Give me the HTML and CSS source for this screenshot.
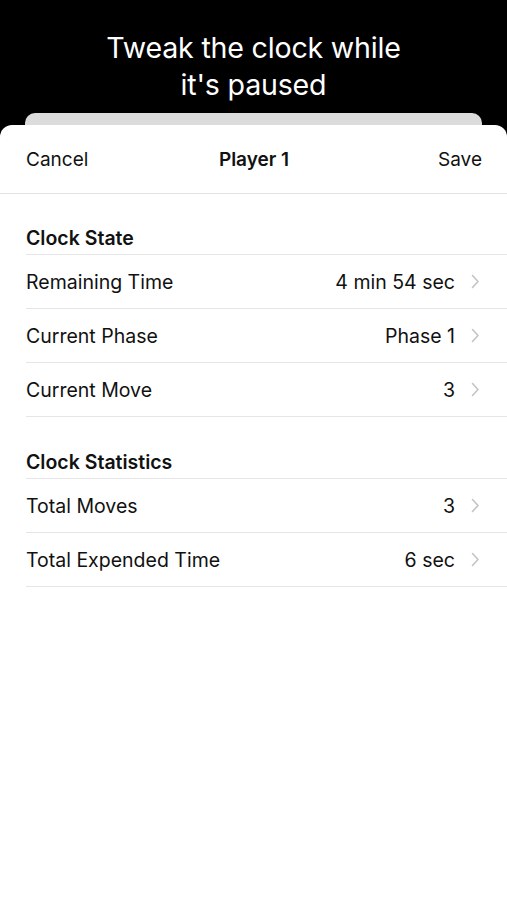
FILE: index.html
```html
<!doctype html>
<html>
  <head>
    <meta charset="utf-8">
    <link rel="stylesheet" href="styles.css">
  </head>
  <body>
    <div class="promo">
      <h1>Tweak the clock while<br>it's paused</h1>
    </div>

    <div class="stack">
      <div class="backSheet"></div>
      <div class="sheet">
        <div class="navBar">
          <span class="navButton">Cancel</span>
          <span class="navTitle">Player 1</span>
          <span class="navButton save">Save</span>
        </div>

        <div class="section first">
          <h2>Clock State</h2>
          <div class="row"><span class="label">Remaining Time</span><span class="value">4 min 54 sec</span><span class="chevron"><svg width="9" height="15" viewBox="0 0 9 15"><path d="M1.5 1.5 L7 7.5 L1.5 13.5" fill="none" stroke="#c4c4c7" stroke-width="1.6" stroke-linecap="round" stroke-linejoin="round"/></svg></span></div>
          <div class="row"><span class="label">Current Phase</span><span class="value">Phase 1</span><span class="chevron"><svg width="9" height="15" viewBox="0 0 9 15"><path d="M1.5 1.5 L7 7.5 L1.5 13.5" fill="none" stroke="#c4c4c7" stroke-width="1.6" stroke-linecap="round" stroke-linejoin="round"/></svg></span></div>
          <div class="row"><span class="label">Current Move</span><span class="value">3</span><span class="chevron"><svg width="9" height="15" viewBox="0 0 9 15"><path d="M1.5 1.5 L7 7.5 L1.5 13.5" fill="none" stroke="#c4c4c7" stroke-width="1.6" stroke-linecap="round" stroke-linejoin="round"/></svg></span></div>
        </div>

        <div class="section">
          <h2>Clock Statistics</h2>
          <div class="row"><span class="label">Total Moves</span><span class="value">3</span><span class="chevron"><svg width="9" height="15" viewBox="0 0 9 15"><path d="M1.5 1.5 L7 7.5 L1.5 13.5" fill="none" stroke="#c4c4c7" stroke-width="1.6" stroke-linecap="round" stroke-linejoin="round"/></svg></span></div>
          <div class="row"><span class="label">Total Expended Time</span><span class="value">6 sec</span><span class="chevron"><svg width="9" height="15" viewBox="0 0 9 15"><path d="M1.5 1.5 L7 7.5 L1.5 13.5" fill="none" stroke="#c4c4c7" stroke-width="1.6" stroke-linecap="round" stroke-linejoin="round"/></svg></span></div>
        </div>
      </div>
    </div>
  </body>
</html>
```

FILE: styles.css
```css
html, body {
  margin:0;
  padding:0;
  height:100%;
}

body {
  font-family:Inter, "Liberation Sans", sans-serif;
  background-color:#000;
  color:#111;
  display:flex;
  flex-direction:column;
}

.promo {
  height:113px;
  display:flex;
  align-items:flex-start;
  justify-content:center;
}

.promo h1 {
  margin:29px 0 0 0;
  color:#fff;
  font-weight:400;
  font-size:28.6px;
  line-height:37px;
  text-align:center;
  letter-spacing:-0.2px;
}

.stack {
  flex:1;
  display:flex;
  flex-direction:column;
}

.backSheet {
  height:12px;
  margin:0 25px;
  background-color:#dcdcdc;
  border-radius:10px 10px 0 0;
}

.sheet {
  flex:1;
  background-color:#fff;
  border-radius:12px 12px 0 0;
}

.navBar {
  height:68px;
  display:grid;
  grid-template-columns:1fr auto 1fr;
  align-items:center;
  padding:0 25px 0 26px;
  border-bottom:1px solid #e2e2e4;
  font-size:19px;
}

.navTitle {
  font-weight:600;
}

.save {
  text-align:right;
}

.section {
  padding-left:26px;
  margin-top:33px;
}

.section.first {
  margin-top:32px;
}

.section h2 {
  margin:0;
  font-size:19.5px;
  font-weight:600;
  height:28px;
  line-height:24px;
  border-bottom:1px solid #e6e6e8;
}

.row {
  height:53px;
  display:flex;
  align-items:center;
  border-bottom:1px solid #e6e6e8;
  padding-right:27px;
  font-size:19.5px;
}

.label {
  flex:1;
}

.value {
  color:#111;
}

.chevron {
  display:flex;
  margin-left:16px;
}
```
